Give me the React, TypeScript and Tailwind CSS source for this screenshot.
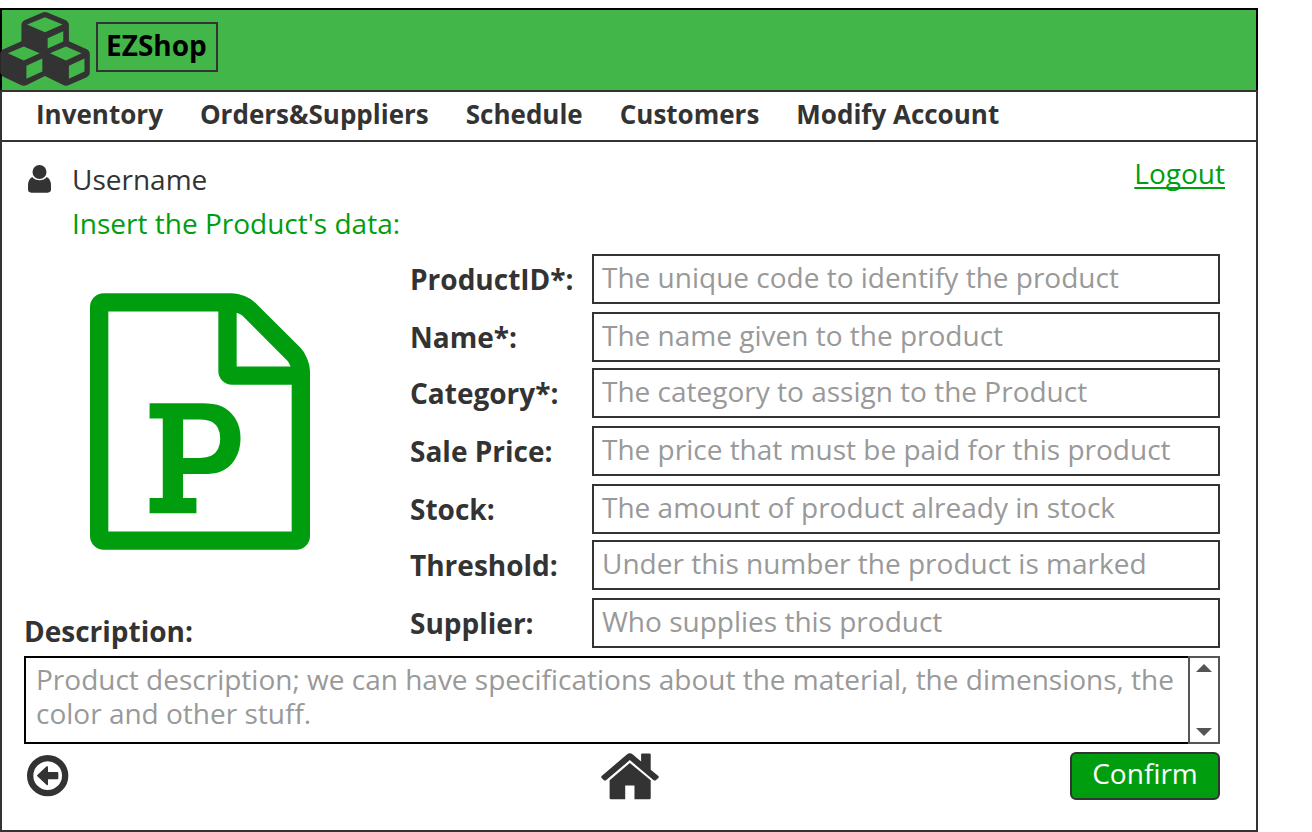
import React from "react";

type Field = { id: string; label: string; hint: string };

const fieldGroups: Field[][] = [
  [
    { id: "product-id", label: "ProductID*:", hint: "The unique code to identify the product" },
    { id: "name", label: "Name*:", hint: "The name given to the product" },
  ],
  [
    { id: "category", label: "Category*:", hint: "The category to assign to the Product" },
    { id: "sale-price", label: "Sale Price:", hint: "The price that must be paid for this product" },
    { id: "stock", label: "Stock:", hint: "The amount of product already in stock" },
  ],
  [
    { id: "threshold", label: "Threshold:", hint: "Under this number the product is marked" },
    { id: "supplier", label: "Supplier:", hint: "Who supplies this product" },
  ],
];

const navItems = ["Inventory", "Orders&Suppliers", "Schedule", "Customers", "Modify Account"];

function CubesIcon() {
  return (
    <svg viewBox="0 11 270 223" className="-ml-0.5 h-[74px] w-[90px] shrink-0 fill-[#333]" aria-hidden="true">
      <path
        fillRule="evenodd"
        d="M126 13Q135 9 144 13L198 36Q207 41 207 52V99L261 123Q270 128 270 138V194Q270 203 261 208L207 231Q198 236 190 231L135 204L80 231Q71 236 62 231L8 205Q0 200 0 192V136Q0 128 8 124L64 99V51Q64 41 73 36Z
          M81 49L135 72L188 49L135 27Z M143 90V121L190 100V69Z
          M23 135L71 157L119 135L71 115Z M79 173V212L127 190V151Z
          M150 135L198 157L245 135L198 115Z M207 173V212L254 190V151Z"
      />
    </svg>
  );
}

function UserIcon() {
  return (
    <svg viewBox="0 0 69 84" className="h-7 w-[23px] fill-[#333]" aria-hidden="true">
      <circle cx="34.5" cy="21" r="21" />
      <path d="M13 36Q0 42 0 62V73Q0 83 10 83H59Q69 83 69 73V62Q69 42 56 36Q48 46 34.5 46Q21 46 13 36Z" />
    </svg>
  );
}

function ProductFileIcon() {
  return (
    <svg viewBox="0 0 1536 1792" className="h-[257px] w-[220px] fill-[#009e0f]" role="img" aria-label="Product">
      <path d="M1468 380q28 28 48 76t20 88v1152q0 40-28 68t-68 28h-1344q-40 0-68-28t-28-68v-1600q0-40 28-68t68-28h896q40 0 88 20t76 48zm-444-244v376h376q-10-29-22-41l-313-313q-12-12-41-22zm384 1528v-1024h-416q-40 0-68-28t-28-68v-416h-768v1536h1280zm-992-234v106h327v-106h-93v-167h137q76 0 118-15 67-23 106.500-87t39.500-146q0-81-37-141t-100-87q-48-19-130-19h-368v107h92v555h-92zm353-280h-119v-268h120q52 0 83 18 56 33 56 115 0 89-62 120-31 15-78 15z" />
    </svg>
  );
}

function BackIcon() {
  return (
    <svg viewBox="0 0 126 126" className="size-[42px]" aria-hidden="true">
      <circle cx="62" cy="62" r="52.500" fill="none" stroke="#333" strokeWidth="19" />
      <path fill="#333" d="M31 60L59 34Q63 32 63 37V51H91Q94 51 94 54V70Q94 73 91 73H63V87Q63 92 59 90L31 64Q29 62 31 60Z" />
    </svg>
  );
}

function HomeIcon() {
  return (
    <svg viewBox="62 68 175 141" className="h-[47px] w-[58px] fill-[#333]" aria-hidden="true">
      <path d="M64 137L140 72Q149 65 158 72L183 93V72q0-3 3-3h22q4 0 4 3v46L235 137q3 3 0 6l-7 6q-4 3-8 0L149 89L78 149q-4 3-8 0l-6-6q-3-3 0-6Z" />
      <path d="M149 98L212 150V203q0 4-4 4H163V166H135V207H92q-4 0-4-4V150Z" />
    </svg>
  );
}

export default function App() {
  return (
    <div className="bg-white pt-2 pr-[54px] font-['Open_Sans',sans-serif] text-[28px] text-[#333]">
      <header className="flex h-[82px] items-start border-x-2 border-t-2 border-black bg-[#43b649]">
        <div className="flex items-start gap-1.5 pt-0.5">
          <CubesIcon />
          <h1 className="mt-2.5 h-[50px] border-2 border-[#333] pr-[9px] pl-2 text-[28px] leading-[42px] font-bold text-black">
            EZShop
          </h1>
        </div>
      </header>

      <nav className="flex gap-[37px] border-2 border-[#333] px-[34px] pb-1 text-[26px] leading-[44px] font-bold">
        {navItems.map((item) => (
          <a key={item} href="#" className="whitespace-nowrap">
            {item}
          </a>
        ))}
      </nav>

      <main className="border-x-2 border-b-2 border-[#333] pt-[15px] pr-9 pb-[30px] pl-[22px]">
        <div className="flex items-start justify-between">
          <div className="grid grid-cols-[48px_auto] items-center leading-[44px]">
            <span className="pl-1">
              <UserIcon />
            </span>
            <span>Username</span>
            <h2 className="col-start-2 text-[#009e0f]">Insert the Product's data:</h2>
          </div>
          <a
            href="#"
            className="-mr-[5px] leading-8 text-[#009e0f] underline decoration-2 underline-offset-3 [text-decoration-skip-ink:none]"
          >
            Logout
          </a>
        </div>

        <form onSubmit={(e) => e.preventDefault()}>
          <div className="mt-[9px] flex">
            <div className="flex w-[386px] shrink-0 flex-col justify-between">
              <div className="pt-[39px] pl-[66px]">
                <ProductFileIcon />
              </div>
              <label htmlFor="description" className="leading-[34px] font-bold">
                Description:
              </label>
            </div>
            <div className="flex grow flex-col gap-1.5">
              {fieldGroups.map((group) => (
                <div key={group[0].id} className="flex flex-col gap-2">
                  {group.map((field) => (
                    <div key={field.id} className="flex items-center">
                      <label htmlFor={field.id} className="w-[182px] shrink-0 leading-[50px] font-bold">
                        {field.label}
                      </label>
                      <input
                        id={field.id}
                        type="text"
                        placeholder={field.hint}
                        className="h-[50px] w-full min-w-0 border-2 border-[#333] px-2 pb-1 placeholder:text-[#999]"
                      />
                    </div>
                  ))}
                </div>
              ))}
            </div>
          </div>

          <div className="mt-2 flex h-[88px]">
            <textarea
              id="description"
              placeholder="Product description; we can have specifications about the material, the dimensions, the color and other stuff."
              className="min-w-0 grow resize-none overflow-hidden border-y-2 border-l-2 border-black py-1 pl-2.5 leading-[34px] placeholder:text-[#999]"
            />
            <div className="flex w-8 shrink-0 flex-col justify-between border-2 border-[#555] p-1.5">
              <button type="button" aria-label="Scroll up">
                <svg viewBox="0 0 16 8" className="h-2 w-4 fill-[#555]">
                  <path d="M0 8L8 0L16 8Z" />
                </svg>
              </button>
              <button type="button" aria-label="Scroll down">
                <svg viewBox="0 0 16 8" className="h-2 w-4 fill-[#555]">
                  <path d="M0 0L8 8L16 0Z" />
                </svg>
              </button>
            </div>
          </div>

          <div className="mt-2 grid grid-cols-[1fr_auto_1fr] items-center">
            <a href="#" aria-label="Back" className="justify-self-start pl-[3px]">
              <BackIcon />
            </a>
            <a href="#" aria-label="Home" className="pl-4">
              <HomeIcon />
            </a>
            <button
              type="submit"
              className="h-12 w-[150px] justify-self-end rounded-md border-2 border-[#333] bg-[#009e0f] pb-1.5 leading-[38px] text-white"
            >
              Confirm
            </button>
          </div>
        </form>
      </main>
    </div>
  );
}
